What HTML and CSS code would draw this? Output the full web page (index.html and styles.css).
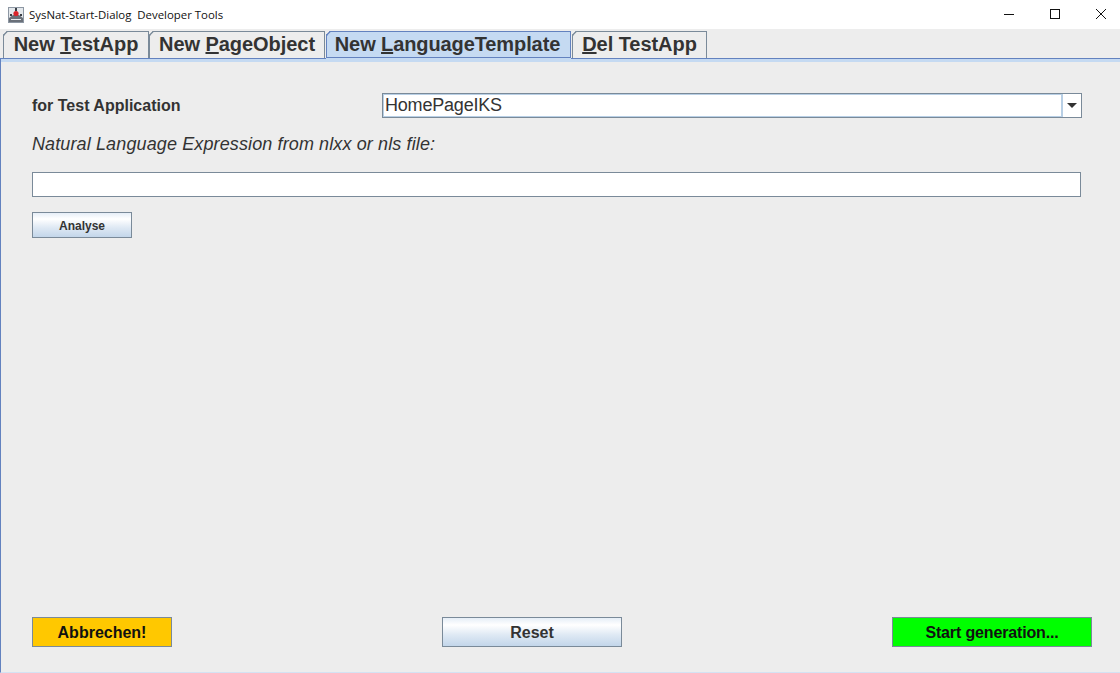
FILE: index.html
```html
<!DOCTYPE html>
<html lang="en">
<head>
    <meta charset="UTF-8" />
    <title>SysNat-Start-Dialog Developer Tools</title>
    <link rel="stylesheet" href="styles.css">
</head>
<body>
<div class="window">
    <div class="titlebar">
        <svg class="app-icon" width="16" height="16" viewBox="0 0 16 16">
            <rect x="0" y="0" width="16" height="16" fill="#8d97a3"/>
            <rect x="1" y="1" width="14" height="14" fill="#e4e8ec"/>
            <path d="M1 11 L5 8 L11 8 L15 11 L15 15 L1 15 Z" fill="#6a7079"/>
            <path d="M3 12 L13 12 L13 13 L3 13 Z" fill="#e8eaec"/>
            <circle cx="8" cy="6.5" r="2.6" fill="#d8232a"/>
            <rect x="7" y="1" width="2" height="3" fill="#3a3e45"/>
            <rect x="2" y="7" width="2" height="2" fill="#3a3e45"/>
            <rect x="12" y="7" width="2" height="2" fill="#3a3e45"/>
        </svg>
        <span class="title-text">SysNat-Start-Dialog&nbsp; Developer Tools</span>
        <div class="win-buttons">
            <svg width="12" height="12" viewBox="0 0 12 12"><path d="M1 6.5 H11" stroke="#111" fill="none"/></svg>
            <svg width="12" height="12" viewBox="0 0 12 12"><rect x="1.5" y="1.5" width="9" height="9" stroke="#111" fill="none"/></svg>
            <svg width="12" height="12" viewBox="0 0 12 12"><path d="M1 1 L11 11 M11 1 L1 11" stroke="#111" fill="none"/></svg>
        </div>
    </div>

    <div class="tabs">
        <div class="tab tab-1">New <u>T</u>estApp</div>
        <div class="tab tab-2">New <u>P</u>ageObject</div>
        <div class="tab tab-3 active">New <u>L</u>anguageTemplate</div>
        <div class="tab tab-4"><u>D</u>el TestApp</div>
    </div>

    <div class="panel">
        <div class="form">
            <div class="app-row">
                <label class="app-label">for Test Application</label>
                <div class="combo">
                    <div class="combo-value">HomePageIKS</div>
                    <div class="combo-arrow"><span class="arrow"></span></div>
                </div>
            </div>
            <p class="expr-label">Natural Language Expression from nlxx or nls file:</p>
            <div class="expr-input"></div>
            <div class="btn btn-analyse">Analyse</div>
        </div>
        <div class="footer">
            <div class="btn btn-big btn-cancel">Abbrechen!</div>
            <div class="btn btn-big btn-reset">Reset</div>
            <div class="btn btn-big btn-start">Start generation...</div>
        </div>
    </div>
</div>
</body>
</html>
```

FILE: styles.css
```css
*{
    padding:0;
    margin:0;
    box-sizing:border-box;
}
html,body{
    height:100%;
}
body{
    font-family:"Liberation Sans",Arial,sans-serif;
    background:#ededed;
    color:#333333;
    overflow:hidden;
}
.window{
    height:673px;
    display:flex;
    flex-direction:column;
}
.titlebar{
    height:29px;
    flex:none;
    background:#ffffff;
    display:flex;
    align-items:center;
    padding-left:8px;
}
.app-icon{
    margin-right:5px;
}
.title-text{
    font-family:"Open Sans","Noto Sans",sans-serif;
    font-size:11.4px;
    color:#111111;
    margin-top:-1px;
}
.win-buttons{
    margin-left:auto;
    display:flex;
    gap:34px;
    padding-right:13px;
    margin-top:-2px;
}

/* tabs */
.tabs{
    height:29px;
    flex:none;
    display:flex;
    align-items:flex-end;
    padding-left:3px;
    background:#ededed;
    position:relative;
    z-index:1;
}
.tab{
    height:27px;
    border:1px solid #7a8a99;
    border-bottom:none;
    border-top-left-radius:4px;
    corner-shape:bevel;
    font-size:20px;
    font-weight:bold;
    line-height:25px;
    text-align:center;
    color:#333333;
    white-space:nowrap;
    letter-spacing:-0.05px;
}
.tab-1{ width:146px; }
.tab-2{ width:176px; }
.tab-3{ width:245px; margin-left:1px; padding-right:2px; }
.tab-4{ width:135px; margin-left:1px; }
.tab.active{
    position:relative;
    background:#c5daf2;
    border:1px solid #6382bf;
    letter-spacing:-0.1px;
}
/* covers the panel line under the selected tab */
.tab.active::after{
    content:"";
    position:absolute;
    left:-1px;
    right:-1px;
    bottom:-2px;
    height:1px;
    background:#c5daf2;
}

/* panel */
.panel{
    flex:1;
    display:flex;
    flex-direction:column;
    justify-content:space-between;
    border-top:1px solid #6382bf;
    border-left:1px solid #6382bf;
    box-shadow:inset 0 3px 0 #c5daf2;
    border-bottom:1px solid #d4e2f3;
}
.form{
    padding:34px 38px 0 31px;
}
.app-row{
    display:flex;
    align-items:center;
    height:25px;
}
.app-label{
    width:350px;
    font-size:16px;
    font-weight:bold;
}
.combo{
    width:700px;
    height:25px;
    display:flex;
    border:1px solid #7a8a99;
    background:#ffffff;
}
.combo-value{
    flex:1;
    border:1px solid #b8cfe5;
    border-right:2px solid #b8cfe5;
    font-size:18px;
    line-height:21px;
    padding-left:1px;
    letter-spacing:-0.2px;
}
.combo-arrow{
    width:18px;
    display:flex;
    align-items:center;
    justify-content:center;
}
.arrow{
    width:0;
    height:0;
    border-left:5px solid transparent;
    border-right:5px solid transparent;
    border-top:5px solid #333333;
}
.expr-label{
    margin-top:16px;
    font-size:18px;
    font-style:italic;
    line-height:21px;
    letter-spacing:0.12px;
}
.expr-input{
    margin-top:17px;
    width:1049px;
    height:25px;
    background:#ffffff;
    border:1px solid #7a8a99;
}

/* buttons */
.btn{
    border:1px solid #7a8a99;
    background:linear-gradient(to bottom,#e6eef7 0%,#ffffff 25%,#dfe9f4 60%,#c3d6ea 100%);
    font-weight:bold;
    text-align:center;
    color:#333333;
}
.btn-analyse{
    margin-top:15px;
    width:100px;
    height:26px;
    font-size:12px;
    line-height:26px;
}
.footer{
    display:flex;
    justify-content:space-between;
    padding:0 28px 25px 31px;
}
.btn-big{
    height:30px;
    font-size:16px;
    line-height:30px;
}
.btn-cancel{
    width:140px;
    background:#ffc800;
    color:#111111;
}
.btn-reset{
    width:180px;
}
.btn-start{
    width:200px;
    background:#00ff00;
    color:#111111;
    letter-spacing:-0.15px;
}
```
